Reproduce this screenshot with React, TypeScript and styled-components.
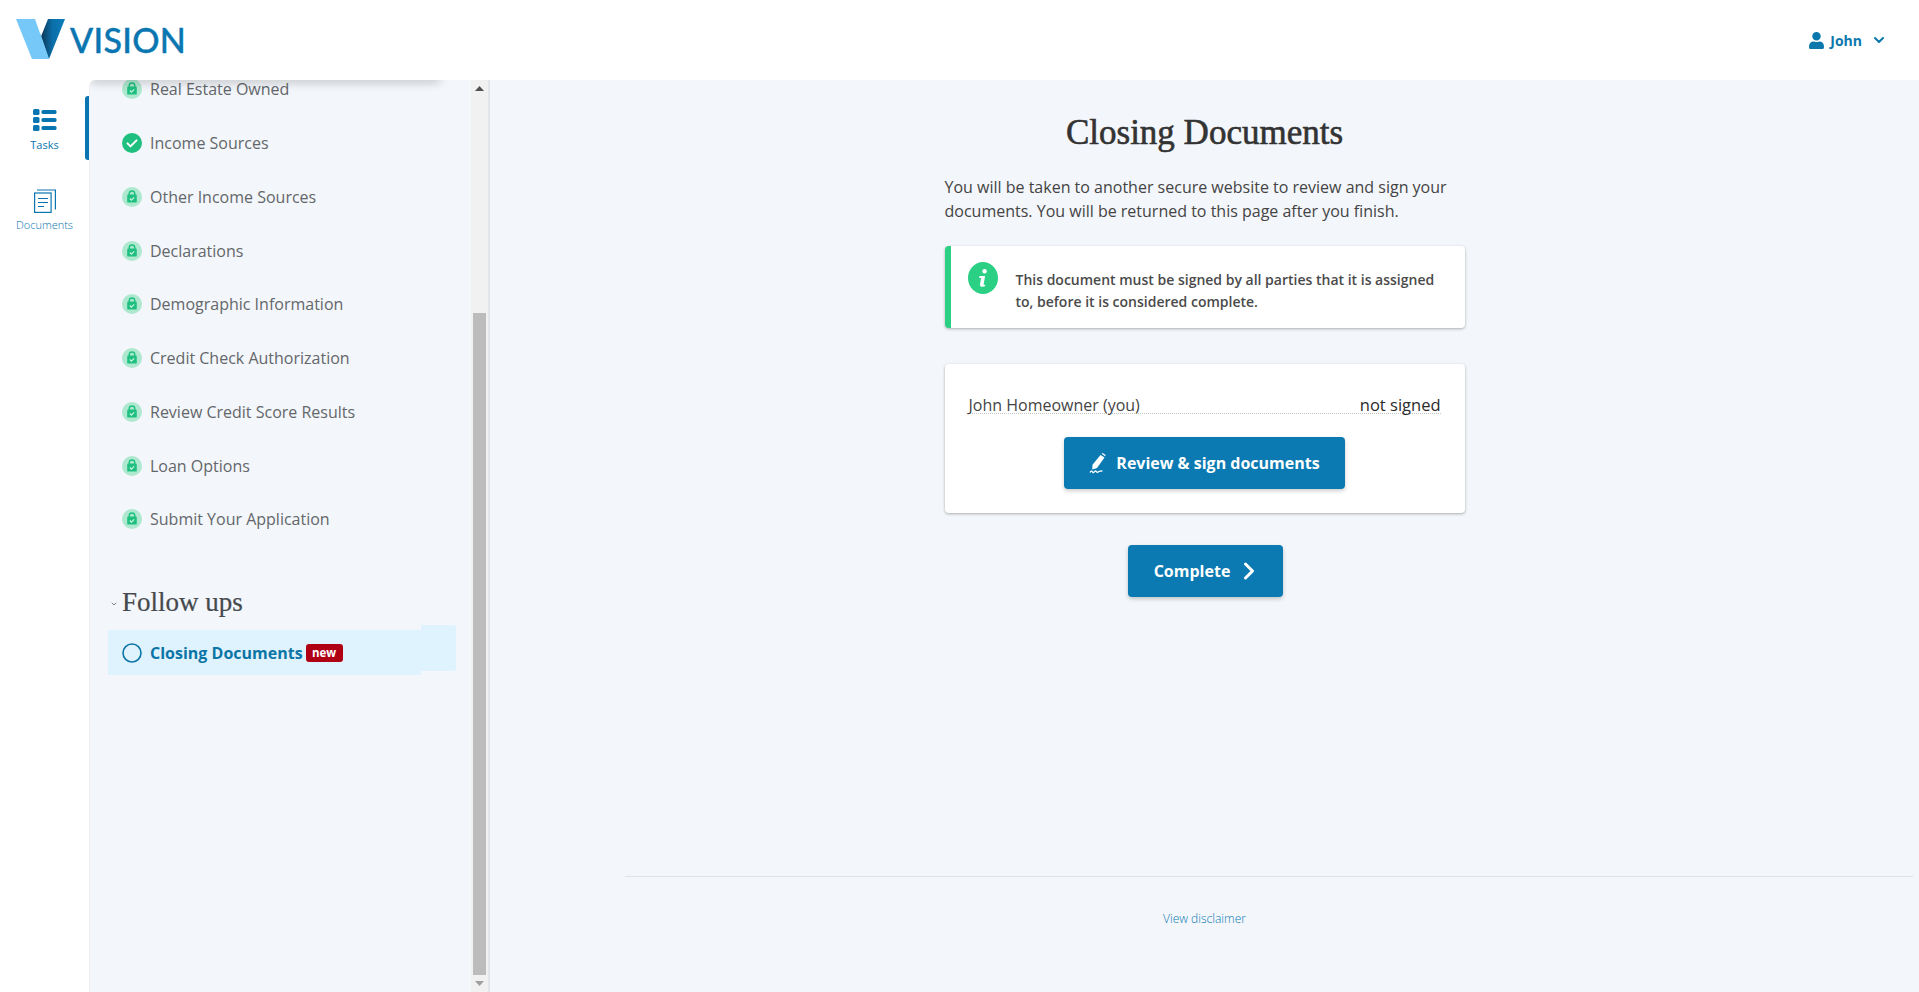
import React from 'react';
import styled, { createGlobalStyle } from 'styled-components';
import { FaUser } from 'react-icons/fa';
import { FiChevronDown, FiChevronRight } from 'react-icons/fi';

const GlobalStyle = createGlobalStyle`
    html, body {
        margin: 0;
        padding: 0;
        height: 100%;
        overflow: hidden;
        background: #fff;
        font-family: "Open Sans", "Liberation Sans", sans-serif;
    }
    * { box-sizing: border-box; }
`;

const Page = styled.div`
    width: 1919px;
    height: 992px;
    display: flex;
    flex-direction: column;
    overflow: hidden;
`;
const Header = styled.header`
    height: 80px;
    flex: none;
    display: flex;
    align-items: center;
    justify-content: space-between;
    padding: 0 32px 0 16px;
    background: #fff;
`;
const Logo = styled.div`
    display: flex;
    align-items: center;
    gap: 5px;
    margin-top: -1px;
`;
const LogoText = styled.span`
    font-family: "Lato", "Open Sans", sans-serif;
    font-size: 34px;
    font-weight: 500;
    letter-spacing: 0.3px;
    line-height: 40px;
    color: #0a76b1;
    -webkit-text-stroke: 0.4px #0a76b1;
`;
const UserMenu = styled.div`
    display: flex;
    align-items: center;
    color: #0b78ad;
    font-size: 14px;
    font-weight: 700;
    svg { display: block; }
`;
const UserName = styled.span`
    margin: 0 9px 0 5px;
`;
const Body = styled.div`
    flex: 1;
    display: flex;
    min-height: 0;
`;
const Rail = styled.nav`
    width: 89px;
    flex: none;
    display: flex;
    flex-direction: column;
    padding-top: 16px;
    background: #fff;
`;
const RailItem = styled.div<{ $active?: boolean }>`
    position: relative;
    height: 64px;
    margin-bottom: 16px;
    display: flex;
    flex-direction: column;
    align-items: center;
    padding-top: 13px;
    color: #0a76b1;
    font-size: 11px;
    font-weight: ${p => (p.$active ? 400 : 300)};

    &::after {
        content: '';
        display: ${p => (p.$active ? 'block' : 'none')};
        position: absolute;
        right: 0;
        top: 0;
        width: 4px;
        height: 64px;
        border-radius: 3px 0 0 3px;
        background: #0a76b1;
    }
`;
const RailLabel = styled.span<{ $tight?: boolean }>`
    margin-top: ${p => (p.$tight ? '5px' : '6px')};
    line-height: 14px;
`;
const Panel = styled.aside`
    position: relative;
    width: 401px;
    flex: none;
    display: flex;
    background: #f3f6fa;
    border-right: 2px solid #e2e4e7;
    border-left: 1px solid #eef0f3;
    border-top-left-radius: 6px;
    overflow: hidden;

    &::before {
        content: '';
        position: absolute;
        top: -8px;
        left: 0;
        width: 350px;
        height: 8px;
        box-shadow: 0 3px 10px rgba(0, 0, 0, 0.2);
    }
`;
const PanelScroll = styled.div`
    flex: 1;
    min-width: 0;
    overflow: hidden;
    padding: 0 16px 0 18px;
`;
const TaskList = styled.div`
    margin-top: -17.5px;
`;
const TaskRow = styled.div`
    height: 53.75px;
    display: flex;
    align-items: center;
    gap: 8px;
    padding-left: 14px;
    font-size: 16px;
    color: #63676b;
`;
const IconSlot = styled.span`
    width: 20px;
    height: 20px;
    flex: none;
    svg { display: block; }
`;
const GroupTitle = styled.h3`
    margin: 35px 0 0;
    height: 42px;
    display: flex;
    align-items: center;
    gap: 4px;
    padding-left: 2px;
    font-family: "Liberation Serif", "DejaVu Serif", serif;
    font-size: 27px;
    font-weight: 400;
    color: #46494d;
    -webkit-text-stroke: 0.2px #46494d;
    svg { display: block; margin-top: 3px; }
`;
const ActiveRow = styled.div`
    position: relative;
    height: 45px;
    width: 313px;
    margin-top: 7px;
    display: flex;
    align-items: center;
    gap: 8px;
    padding-left: 14px;
    background: #dff3fe;
    font-size: 16px;
    font-weight: 700;
    color: #0b75a6;

    &::after {
        content: '';
        position: absolute;
        left: 313px;
        top: -5px;
        width: 35px;
        height: 46px;
        background: #dff3fe;
        border-radius: 0 3px 3px 0;
    }
`;
const RowLabel = styled.span`
    margin-right: -5px;
`;
const NewBadge = styled.span`
    width: 37px;
    height: 18px;
    border-radius: 3px;
    background: #b00014;
    color: #fff;
    font-size: 11.5px;
    font-weight: 700;
    line-height: 17px;
    text-align: center;
`;
const Scrollbar = styled.div`
    width: 17px;
    flex: none;
    display: flex;
    flex-direction: column;
    background: #f1f1f1;
`;
const ScrollArrow = styled.div`
    height: 17px;
    flex: none;
    display: flex;
    align-items: center;
    justify-content: center;
`;
const ScrollTop = styled.div`
    flex: none;
    height: 216px;
`;
const ScrollThumb = styled.div`
    flex: 1;
    margin: 0 2px;
    background: #bcbcbc;
`;
const Main = styled.main`
    flex: 1;
    min-width: 0;
    display: flex;
    flex-direction: column;
    align-items: center;
    background: #f3f6fa;
`;
const Title = styled.h1`
    margin: 35px 0 0;
    font-family: "Liberation Serif", "DejaVu Serif", serif;
    font-size: 35px;
    line-height: 36px;
    font-weight: 400;
    color: #333;
    -webkit-text-stroke: 0.6px #333;
`;
const Content = styled.div`
    width: 520px;
    margin-top: 24px;
    display: flex;
    flex-direction: column;
`;
const Intro = styled.p`
    margin: 0;
    font-size: 16px;
    line-height: 24px;
    color: #444;
`;
const Card = styled.div`
    background: #fff;
    border-radius: 4px;
    box-shadow: 0 1px 3px rgba(0, 0, 0, 0.3);
`;
const InfoCard = styled(Card)`
    margin-top: 23px;
    height: 82px;
    display: flex;
    align-items: flex-start;
    gap: 18px;
    padding: 16px 20px 0 17px;
    border-left: 6px solid #2bd085;
`;
const InfoText = styled.p`
    margin: 7px 0 0;
    font-size: 14px;
    font-weight: 600;
    line-height: 22px;
    color: #4a4a4a;
`;
const SignerCard = styled(Card)`
    margin-top: 36px;
    height: 149px;
    padding: 31px 24px 0;
    display: flex;
    flex-direction: column;
    align-items: center;
`;
const SignerRow = styled.div`
    width: 100%;
    height: 19px;
    display: flex;
    justify-content: space-between;
    border-bottom: 1px dotted #c4c4c4;
    font-size: 16px;
    line-height: 20px;
    color: #444;
`;
const SignerStatus = styled.span`
    font-weight: 500;
    font-size: 16.5px;
    color: #2a2a2a;
`;
const Button = styled.button`
    height: 52px;
    display: flex;
    align-items: center;
    justify-content: center;
    border: 0;
    border-radius: 4px;
    background: #0b7ab2;
    color: #fff;
    font-family: inherit;
    font-size: 16px;
    font-weight: 700;
    box-shadow: 0 2px 4px rgba(0, 0, 0, 0.2);
    svg { display: block; }
`;
const SignButton = styled(Button)`
    width: 281px;
    margin-top: 23px;
    gap: 9px;
`;
const CompleteButton = styled(Button)`
    width: 155px;
    margin: 32px 0 0 183px;
    padding: 0 0 0 7px;
    gap: 5px;
`;
const Spacer = styled.div`
    flex: 1;
`;
const Footer = styled.footer`
    width: 100%;
    height: 116px;
    flex: none;
    display: flex;
    flex-direction: column;
    align-items: center;
`;
const FooterRule = styled.hr`
    align-self: stretch;
    margin: 0 6px 0 135px;
    border: 0;
    border-top: 1px solid #dfe2e6;
`;
const Disclaimer = styled.a`
    margin-top: 34px;
    font-size: 12px;
    font-weight: 300;
    line-height: 16px;
    color: #0b7ab2;
`;

const LogoMark = () => (
    <svg width="49" height="41" viewBox="0 0 49 41">
        <defs>
            <linearGradient id="vshade" x1="0" y1="0" x2="1" y2="0">
                <stop offset="0" stopColor="#0c3350" />
                <stop offset="0.5" stopColor="#0b6ea8" />
                <stop offset="1" stopColor="#0c7dbd" />
            </linearGradient>
        </defs>
        <polygon points="32,0 49,0 33,40 24,40 24,20" fill="url(#vshade)" />
        <polygon points="0,0 19,0 33,40 16,40" fill="#75c8f7" />
        <polygon points="24,13.500 33,40 25,40" fill="#75c8f7" />
    </svg>
);

const TasksIcon = () => (
    <svg width="24" height="23" viewBox="0 0 24 23" fill="#0a76b1">
        <rect x="0" y="0" width="6.5" height="6" rx="1.5" />
        <rect x="0" y="8" width="6.5" height="6" rx="1.5" />
        <rect x="0" y="16" width="6.5" height="6" rx="1.5" />
        <rect x="8.5" y="1" width="15" height="4" rx="1.5" />
        <rect x="8.5" y="9" width="15" height="4" rx="1.5" />
        <rect x="8.5" y="17" width="15" height="4" rx="1.5" />
    </svg>
);

const DocumentsIcon = () => (
    <svg width="22" height="24" viewBox="0 0 22 24" fill="none" stroke="#0a76b1" strokeWidth="1.2">
        <rect x="0.6" y="4" width="16.5" height="19.4" />
        <path d="M3 1h18.4v19.5" />
        <path d="M4 9.5h10M4 13.5h10M4 17.5h6" />
    </svg>
);

const LockBadge = () => (
    <svg width="20" height="20" viewBox="0 0 20 20">
        <circle cx="10" cy="10" r="10" fill="#aee8cf" />
        <path d="M7.2 8V6.8a2.8 2.8 0 0 1 5.6 0V8" fill="none" stroke="#1fbf80" strokeWidth="1.4" />
        <rect x="5.2" y="7.6" width="9.6" height="8" rx="1.2" fill="#1fbf80" />
        <path d="M7.8 11.5l1.6 1.6 2.8-2.8" fill="none" stroke="#c8f3df" strokeWidth="1.2" />
    </svg>
);

const CheckBadge = () => (
    <svg width="20" height="20" viewBox="0 0 20 20">
        <circle cx="10" cy="10" r="10" fill="#1fbf80" />
        <path d="M5.5 10.4l3 3 6-6" fill="none" stroke="#fff" strokeWidth="2" strokeLinecap="round" strokeLinejoin="round" />
    </svg>
);

const OpenCircle = () => (
    <svg width="20" height="20" viewBox="0 0 20 20">
        <circle cx="10" cy="10" r="9" fill="none" stroke="#0b75a6" strokeWidth="1.6" />
    </svg>
);

const InfoBadge = () => (
    <svg width="30" height="32" viewBox="0 0 30 32" style={{ flex: 'none' }}>
        <ellipse cx="15" cy="16" rx="15" ry="16" fill="#2bd085" />
        <circle cx="16.6" cy="9.2" r="2.2" fill="#fff" />
        <path d="M11.5 14h5.6l-1.5 8.2c-.1.6.5.8 1.6.5l-.2 1.5c-2.700.9-5.400.6-5-1.800l1.100-6.500h-1.900z" fill="#fff" />
    </svg>
);

const PenIcon = () => (
    <svg width="18" height="21" viewBox="0 0 18 21" fill="#fff">
        <path d="M11.500 2l4 2.500-7.500 10.500-4.800 1.500.3-4.800z" />
        <path d="M12.600 0.800l1-.7 3 2-.5 1.200z" />
        <path d="M1 19.500c1-1.800 2-1.800 2.500-.6.500 1 1.300.8 2-.2.800-1 1.500-.8 2 0 .6 1 1.500.6 2.500-.2.900-.6 2-.6 3.500-.6" fill="none" stroke="#fff" strokeWidth="1.300" />
    </svg>
);

const tasks = [
    { label: 'Real Estate Owned' },
    { label: 'Income Sources', done: true },
    { label: 'Other Income Sources' },
    { label: 'Declarations' },
    { label: 'Demographic Information' },
    { label: 'Credit Check Authorization' },
    { label: 'Review Credit Score Results' },
    { label: 'Loan Options' },
    { label: 'Submit Your Application' },
];

const App = () => {
    return (
        <Page>
            <GlobalStyle />
            <Header>
                <Logo>
                    <LogoMark />
                    <LogoText>VISION</LogoText>
                </Logo>
                <UserMenu>
                    <FaUser size={17} />
                    <UserName>John</UserName>
                    <FiChevronDown size={16} strokeWidth={3} />
                </UserMenu>
            </Header>
            <Body>
                <Rail>
                    <RailItem $active>
                        <TasksIcon />
                        <RailLabel>Tasks</RailLabel>
                    </RailItem>
                    <RailItem>
                        <DocumentsIcon />
                        <RailLabel $tight>Documents</RailLabel>
                    </RailItem>
                </Rail>
                <Panel>
                    <PanelScroll>
                        <TaskList>
                            {tasks.map(task => (
                                <TaskRow key={task.label}>
                                    <IconSlot>{task.done ? <CheckBadge /> : <LockBadge />}</IconSlot>
                                    {task.label}
                                </TaskRow>
                            ))}
                        </TaskList>
                        <GroupTitle>
                            <FiChevronDown size={8} strokeWidth={2} />
                            Follow ups
                        </GroupTitle>
                        <ActiveRow>
                            <IconSlot><OpenCircle /></IconSlot>
                            <RowLabel>Closing Documents</RowLabel>
                            <NewBadge>new</NewBadge>
                        </ActiveRow>
                    </PanelScroll>
                    <Scrollbar>
                        <ScrollArrow>
                            <svg width="9" height="5" viewBox="0 0 9 5"><polygon points="4.500,0 9,5 0,5" fill="#505050" /></svg>
                        </ScrollArrow>
                        <ScrollTop />
                        <ScrollThumb />
                        <ScrollArrow>
                            <svg width="9" height="5" viewBox="0 0 9 5"><polygon points="0,0 9,0 4.500,5" fill="#a0a0a0" /></svg>
                        </ScrollArrow>
                    </Scrollbar>
                </Panel>
                <Main>
                    <Title>Closing Documents</Title>
                    <Content>
                        <Intro>
                            You will be taken to another secure website to review and sign your documents. You will be returned to this page after you finish.
                        </Intro>
                        <InfoCard>
                            <InfoBadge />
                            <InfoText>This document must be signed by all parties that it is assigned to, before it is considered complete.</InfoText>
                        </InfoCard>
                        <SignerCard>
                            <SignerRow>
                                <span>John Homeowner (you)</span>
                                <SignerStatus>not signed</SignerStatus>
                            </SignerRow>
                            <SignButton>
                                <PenIcon />
                                Review &amp; sign documents
                            </SignButton>
                        </SignerCard>
                        <CompleteButton>
                            Complete
                            <FiChevronRight size={28} strokeWidth={2.6} />
                        </CompleteButton>
                    </Content>
                    <Spacer />
                    <Footer>
                        <FooterRule />
                        <Disclaimer>View disclaimer</Disclaimer>
                    </Footer>
                </Main>
            </Body>
        </Page>
    );
};

export default App;
